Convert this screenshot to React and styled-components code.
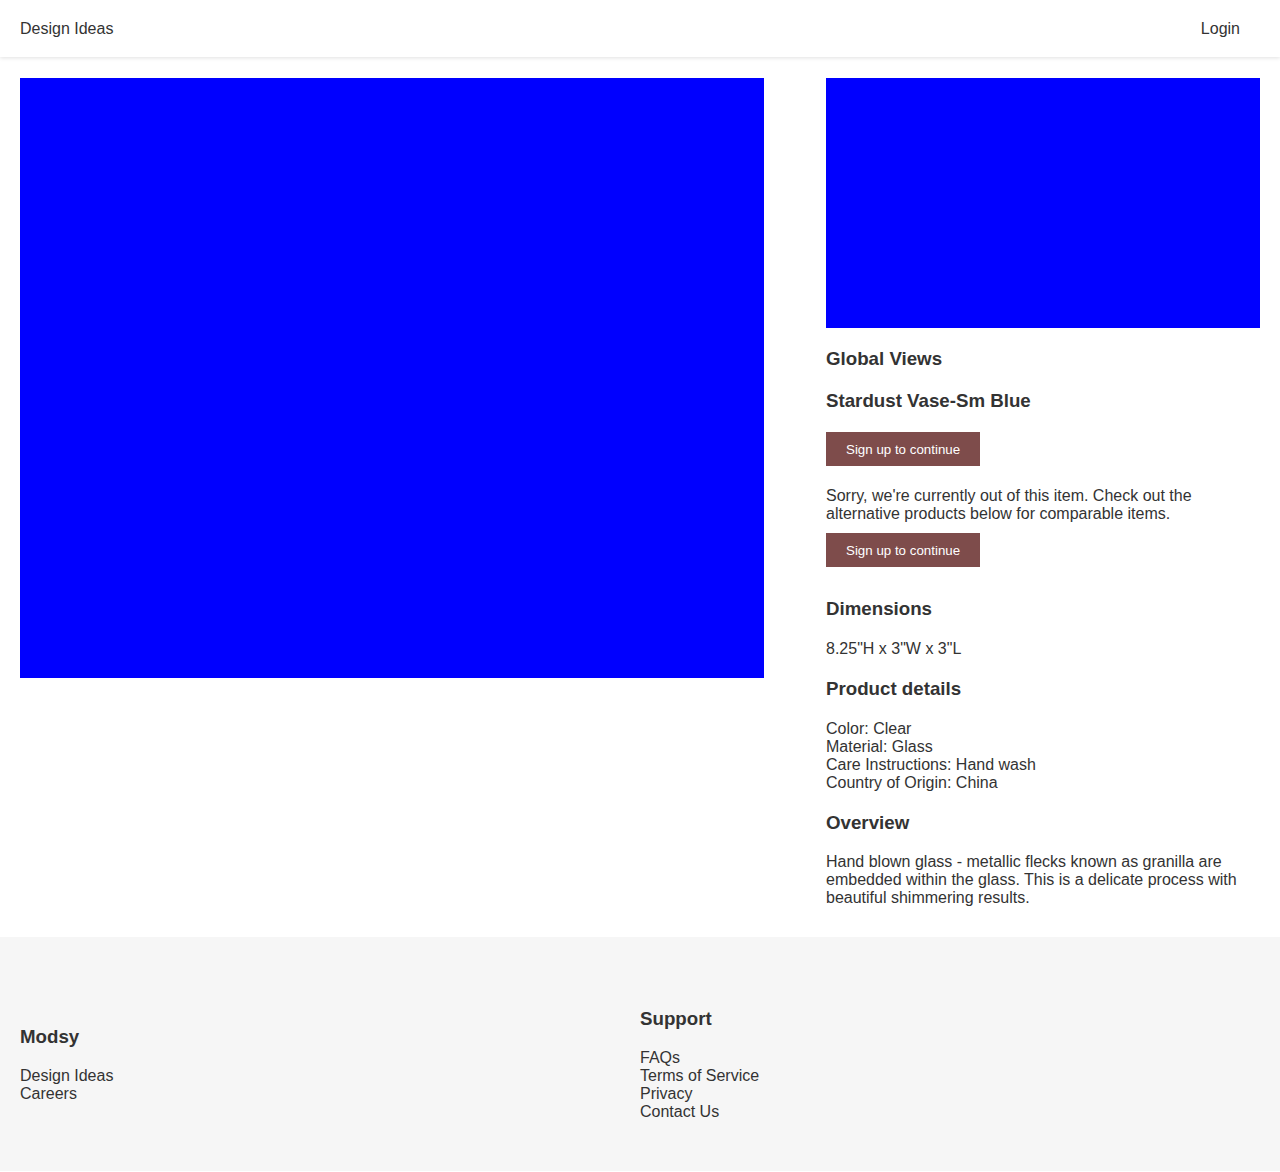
import React from "react";
import styled, { createGlobalStyle } from "styled-components";

const Global = createGlobalStyle`
  html, body { margin: 0; padding: 0; background: #fff; }
  body {
    font-family: "Liberation Sans", Arial, sans-serif;
    font-size: 16px;
    color: #333;
  }
  * { box-sizing: border-box; }
`;

const Header = styled.header`
  height: 57px;
  display: flex;
  align-items: center;
  justify-content: space-between;
  padding: 0 40px 0 20px;
  background: #fff;
  box-shadow: 0 1px 4px rgba(0, 0, 0, 0.12);
  position: relative;
  z-index: 1;
`;

const NavLink = styled.a`
  color: #333;
  text-decoration: none;
  font-size: 16px;
`;

const Main = styled.main`
  display: flex;
  justify-content: space-between;
  align-items: flex-start;
  padding: 21px 20px 30px;
`;

const HeroImage = styled.div`
  width: 60%;
  height: 600px;
  background: #0000ff;
`;

const Side = styled.div`
  width: 35%;
  display: flex;
  flex-direction: column;
  align-items: flex-start;
`;

const SideImage = styled.div`
  width: 100%;
  height: 250px;
  background: #0000ff;
`;

const Heading = styled.h3`
  font-size: 18.72px;
  font-weight: bold;
  line-height: 21.5px;
  margin: ${(p) => p.$top ?? 20}px 0 0;
`;

const Text = styled.div`
  line-height: 18px;
  margin-top: ${(p) => p.$top ?? 20}px;
`;

const Button = styled.button`
  margin-top: ${(p) => p.$top}px;
  height: 34px;
  padding: 0 20px;
  border: none;
  background: #7e4c4b;
  color: #fff;
  font-family: "Liberation Sans", Arial, sans-serif;
  font-size: 13.33px;
  cursor: pointer;
`;

const Footer = styled.footer`
  background: #f6f6f6;
  display: grid;
  grid-template-columns: 1fr 1fr;
  align-items: center;
  padding: 71px 20px 50px;
`;

const FooterCol = styled.div`
  display: flex;
  flex-direction: column;
`;

const FooterHeading = styled.h3`
  font-size: 18.72px;
  font-weight: bold;
  line-height: 21.5px;
  margin: 0 0 20px;
`;

const LinkList = styled.ul`
  list-style: none;
  margin: 0;
  padding: 0;
  line-height: 18px;
`;

export default function App() {
  return (
    <>
      <Global />
      <Header>
        <NavLink href="#">Design Ideas</NavLink>
        <NavLink href="#">Login</NavLink>
      </Header>
      <Main>
        <HeroImage />
        <Side>
          <SideImage />
          <Heading $top={20}>Global Views</Heading>
          <Heading>Stardust Vase-Sm Blue</Heading>
          <Button $top={21}>Sign up to continue</Button>
          <Text $top={21}>
            Sorry, we're currently out of this item. Check out the alternative products below for comparable items.
          </Text>
          <Button $top={10}>Sign up to continue</Button>
          <Heading $top={31}>Dimensions</Heading>
          <Text>8.25"H x 3"W x 3"L</Text>
          <Heading>Product details</Heading>
          <Text $top={21}>
            Color: Clear
            <br />
            Material: Glass
            <br />
            Care Instructions: Hand wash
            <br />
            Country of Origin: China
          </Text>
          <Heading>Overview</Heading>
          <Text $top={19}>
            Hand blown glass - metallic flecks known as granilla are embedded within the glass. This is a delicate process with beautiful shimmering results.
          </Text>
        </Side>
      </Main>
      <Footer>
        <FooterCol>
          <FooterHeading>Modsy</FooterHeading>
          <LinkList>
            <li>Design Ideas</li>
            <li>Careers</li>
          </LinkList>
        </FooterCol>
        <FooterCol>
          <FooterHeading>Support</FooterHeading>
          <LinkList>
            <li>FAQs</li>
            <li>Terms of Service</li>
            <li>Privacy</li>
            <li>Contact Us</li>
          </LinkList>
        </FooterCol>
      </Footer>
    </>
  );
}
